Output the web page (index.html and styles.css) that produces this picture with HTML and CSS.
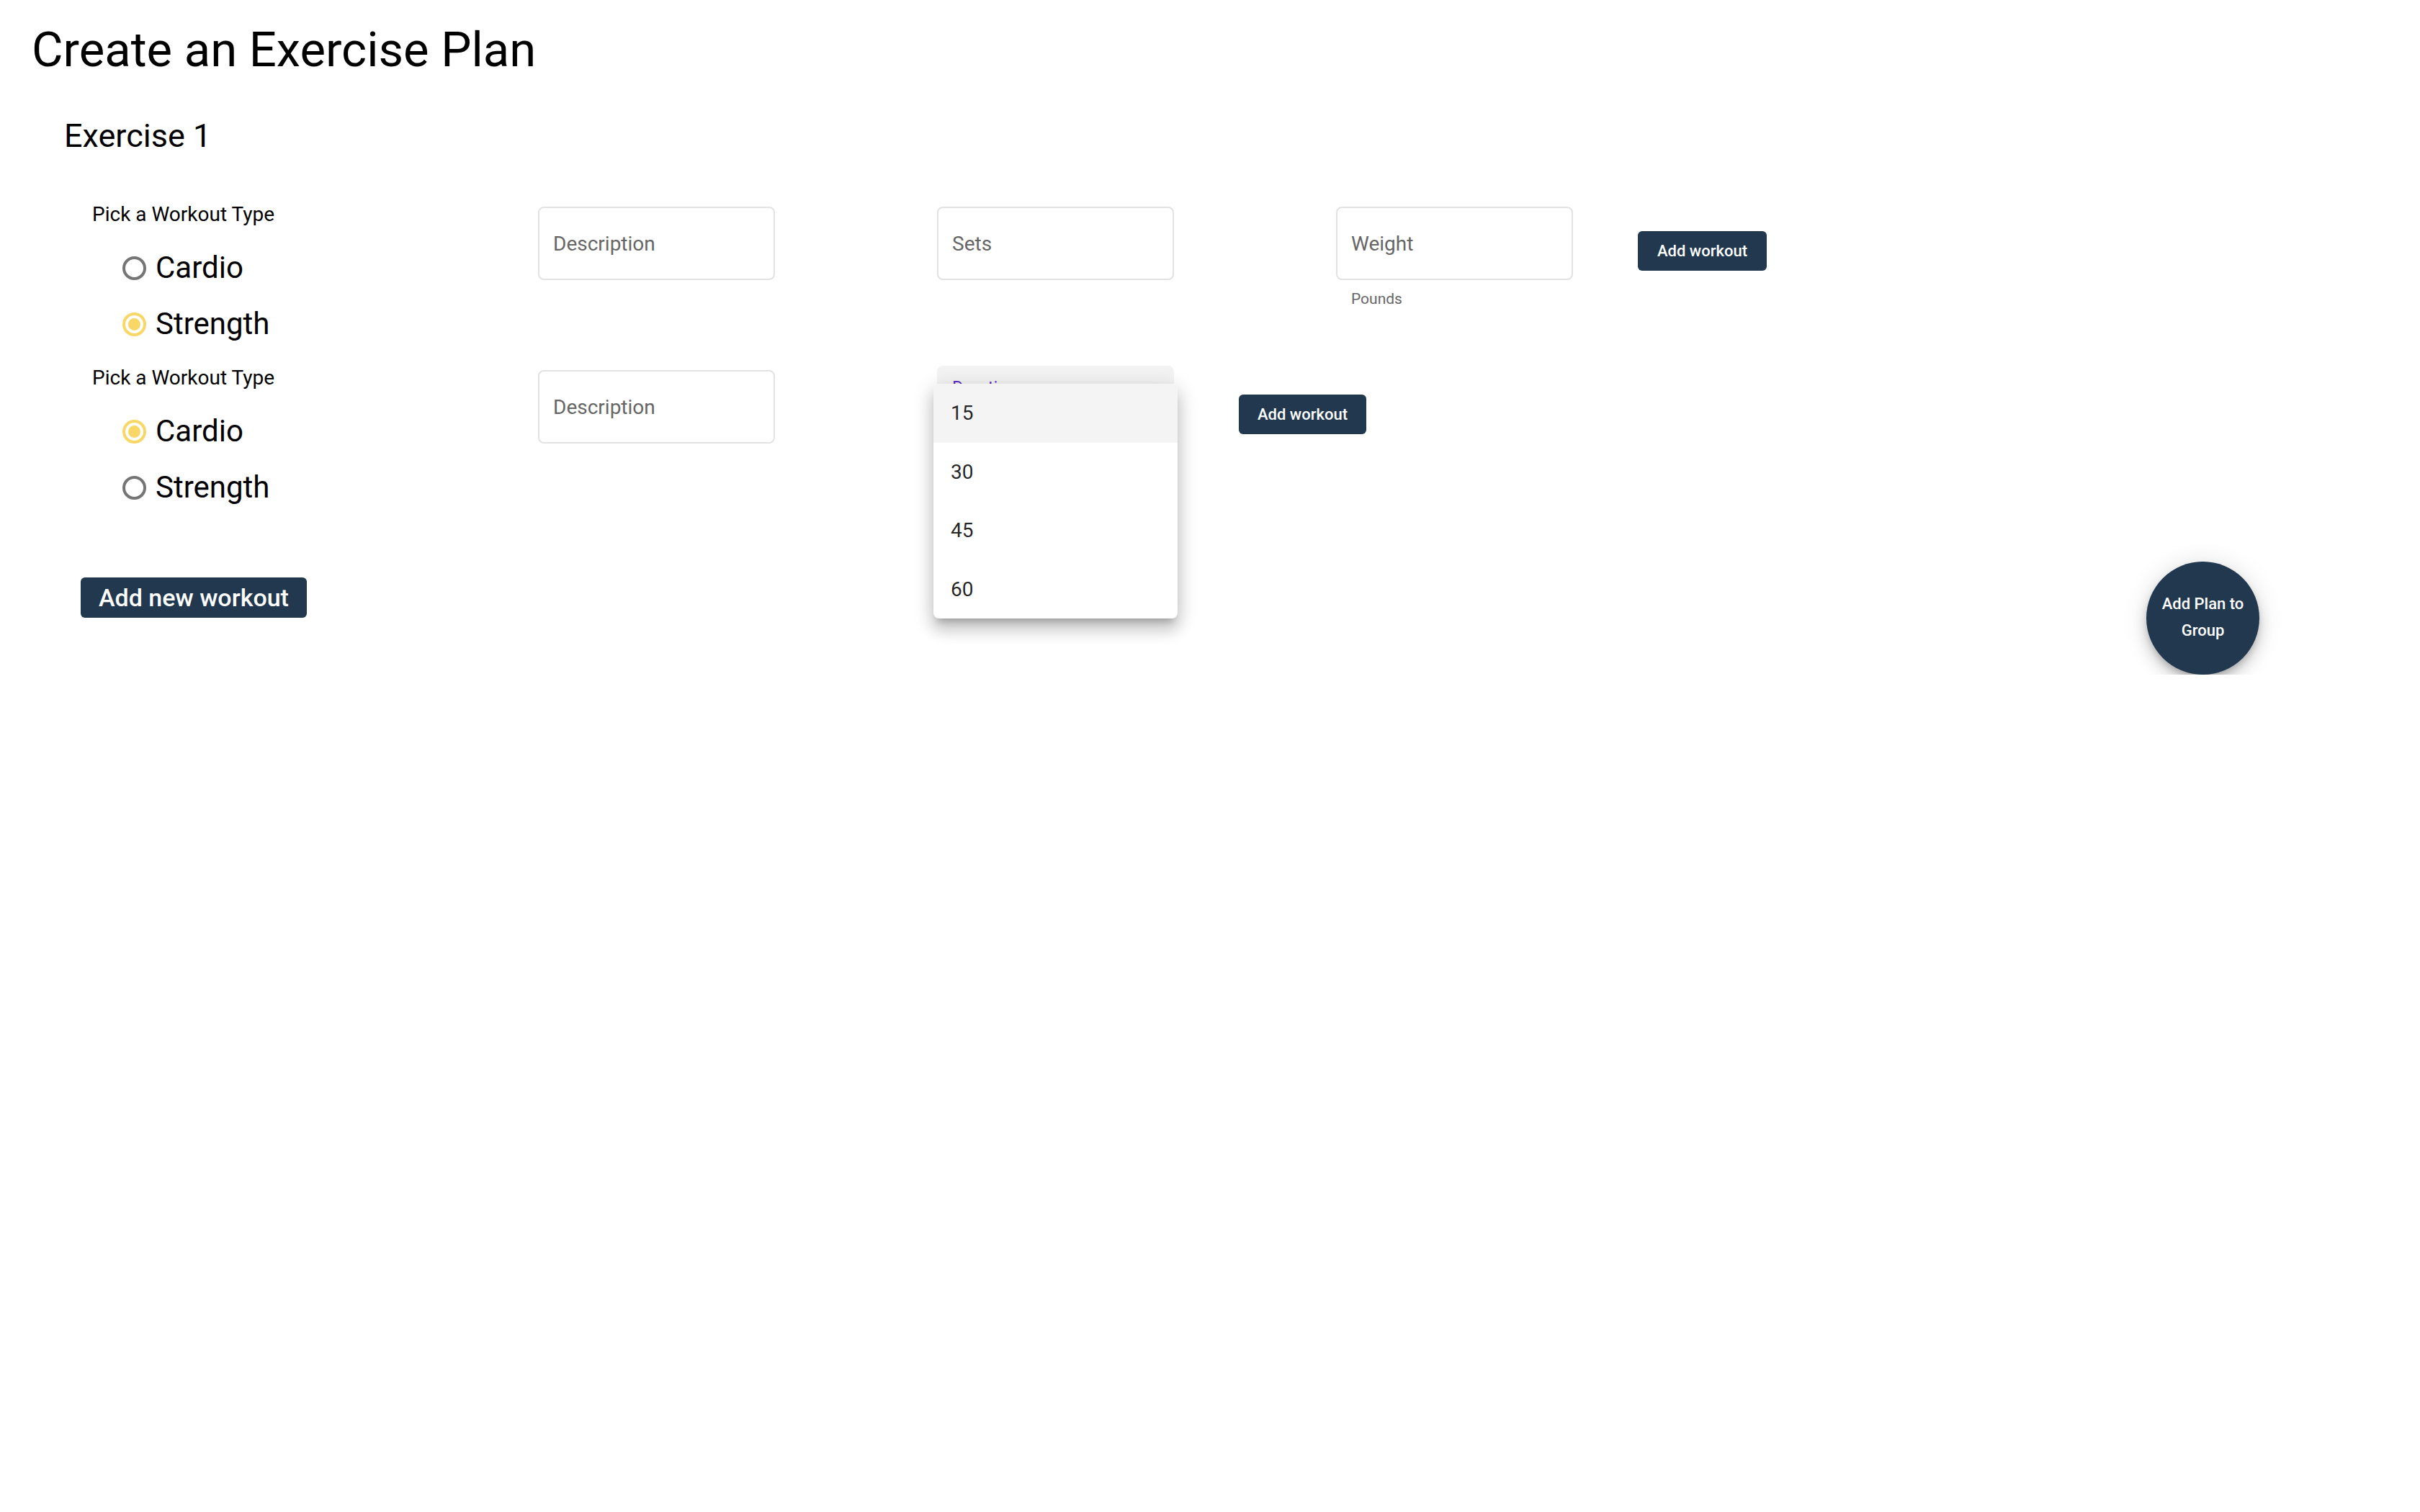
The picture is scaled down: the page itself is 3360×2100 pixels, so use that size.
FILE: index.html
```html
<!DOCTYPE html>
<html lang="en">
<head>
<meta charset="utf-8">
<title>Create an Exercise Plan</title>
<link rel="stylesheet" href="styles.css">
</head>
<body>
<div class="page">
  <h1 class="title">Create an Exercise Plan</h1>
  <h2 class="exercise">Exercise 1</h2>

  <div class="row">
    <div class="type-col">
      <div class="type-label">Pick a Workout Type</div>
      <div class="radio"><span class="radio-dot"></span><span class="radio-text">Cardio</span></div>
      <div class="radio"><span class="radio-dot checked"></span><span class="radio-text">Strength</span></div>
    </div>
    <div class="field"><input class="input" type="text" placeholder="Description"></div>
    <div class="field gap"><input class="input" type="text" placeholder="Sets"></div>
    <div class="field gap">
      <input class="input" type="text" placeholder="Weight">
      <div class="helper">Pounds</div>
    </div>
    <button class="btn-add" type="button">Add workout</button>
  </div>

  <div class="row row-second">
    <div class="type-col">
      <div class="type-label">Pick a Workout Type</div>
      <div class="radio"><span class="radio-dot checked"></span><span class="radio-text">Cardio</span></div>
      <div class="radio"><span class="radio-dot"></span><span class="radio-text">Strength</span></div>
    </div>
    <div class="field"><input class="input" type="text" placeholder="Description"></div>
    <div class="select-wrap gap">
      <div class="select">
        <span class="select-label">Duration</span>
      </div>
      <ul class="menu">
        <li class="menu-item active">15</li>
        <li class="menu-item">30</li>
        <li class="menu-item">45</li>
        <li class="menu-item">60</li>
      </ul>
    </div>
    <button class="btn-add btn-add-second" type="button">Add workout</button>
  </div>

  <div class="footer-row">
    <button class="btn-new" type="button">Add new workout</button>
    <button class="fab" type="button"><span class="fab-text">Add Plan to Group</span></button>
  </div>
</div>
</body>
</html>
```

FILE: styles.css
```css
html, body {
  margin: 0;
  padding: 0;
  background: #ffffff;
}

body {
  font-family: Roboto, "Noto Sans", "Liberation Sans", sans-serif;
  color: #000;
}

.page {
  padding-top: 29px;
}

.title {
  margin: 0 0 0 44px;
  font-size: 67px;
  line-height: 80px;
  font-weight: 400;
}

.exercise {
  margin: 52px 0 0 89px;
  font-size: 45px;
  line-height: 56px;
  font-weight: 400;
}

.row {
  display: flex;
  align-items: flex-start;
  margin-top: 64px;
  padding-left: 128px;
}

.row-second {
  margin-top: 19px;
}

.type-col {
  width: 619px;
  flex: none;
}

.type-label {
  font-size: 28px;
  line-height: 33px;
  margin-bottom: 19px;
  color: #000;
}

.radio {
  display: flex;
  align-items: center;
  height: 78px;
  padding-left: 42px;
}

.radio-dot {
  box-sizing: border-box;
  width: 33px;
  height: 33px;
  border-radius: 50%;
  border: 4px solid #757575;
  flex: none;
  position: relative;
}

.radio-dot.checked {
  border-color: #f9d766;
}

.radio-dot.checked::after {
  content: "";
  position: absolute;
  left: 4px;
  top: 4px;
  width: 17px;
  height: 17px;
  border-radius: 50%;
  background: #f9d766;
}

.radio-text {
  margin-left: 13px;
  font-size: 42px;
  line-height: 78px;
  color: #000;
}

.field {
  width: 329px;
  flex: none;
  margin-top: 6px;
}

.gap {
  margin-left: 225px;
}

.input {
  box-sizing: border-box;
  display: block;
  width: 100%;
  height: 102px;
  margin: 0;
  padding: 0 19px;
  border: 2px solid #e2e2e2;
  border-radius: 8px;
  background: #fff;
  font-family: Roboto, "Noto Sans", "Liberation Sans", sans-serif;
  font-size: 28px;
  color: #222;
  outline: none;
}

.input::placeholder {
  color: #666666;
  opacity: 1;
}

.helper {
  margin-top: 14px;
  padding-left: 21px;
  font-size: 21px;
  line-height: 25px;
  color: #666666;
}

.btn-add {
  flex: none;
  margin-left: 90px;
  margin-top: 40px;
  height: 55px;
  padding: 0 27px;
  border: none;
  border-radius: 6px;
  background: #22384f;
  color: #fff;
  font-family: Roboto, "Noto Sans", "Liberation Sans", sans-serif;
  font-size: 22px;
  font-weight: 500;
  line-height: 55px;
  cursor: pointer;
}

.btn-add-second {
  margin-left: 90px;
  padding: 0 26px;
}

.select-wrap {
  position: relative;
  width: 329px;
  flex: none;
}

.select {
  box-sizing: border-box;
  height: 104px;
  padding: 16px 21px 0;
  background: #f3f3f3;
  border-radius: 8px 8px 0 0;
  border-bottom: 2px solid #8a8a8a;
}

.select-label {
  display: block;
  font-size: 24px;
  line-height: 28px;
  color: #5b2fc4;
}

.menu {
  position: absolute;
  left: -5px;
  top: 25px;
  width: 339px;
  margin: 0;
  padding: 0;
  list-style: none;
  background: #fff;
  border-radius: 8px;
  overflow: hidden;
  box-shadow: 0 10px 10px -6px rgba(0,0,0,0.2), 0 16px 20px 2px rgba(0,0,0,0.14), 0 6px 28px 4px rgba(0,0,0,0.12);
  z-index: 5;
}

.menu-item {
  height: 81.5px;
  line-height: 81.5px;
  padding-left: 24px;
  font-size: 28px;
  color: rgba(0,0,0,0.87);
}

.menu-item.active {
  background: #f4f4f4;
}

.footer-row {
  display: flex;
  justify-content: space-between;
  align-items: flex-start;
  margin-top: 67px;
  padding-left: 112px;
  padding-right: 223px;
}

.btn-new {
  margin-top: 19px;
  height: 56px;
  padding: 0 25px;
  border: none;
  border-radius: 6px;
  background: #22384f;
  color: #fff;
  font-family: Roboto, "Noto Sans", "Liberation Sans", sans-serif;
  font-size: 34px;
  font-weight: 500;
  line-height: 56px;
  cursor: pointer;
}

.fab {
  margin-top: -3px;
  width: 157px;
  height: 157px;
  padding: 0;
  border: none;
  border-radius: 50%;
  background: #22384f;
  color: #fff;
  display: flex;
  align-items: center;
  justify-content: center;
  box-shadow: 0 6px 10px -2px rgba(0,0,0,0.2), 0 12px 20px 0 rgba(0,0,0,0.14), 0 2px 36px 0 rgba(0,0,0,0.12);
  cursor: pointer;
}

.fab-text {
  display: block;
  width: 125px;
  margin-top: -4px;
  font-family: Roboto, "Noto Sans", "Liberation Sans", sans-serif;
  font-size: 22px;
  font-weight: 500;
  line-height: 37px;
  text-align: center;
}
```
